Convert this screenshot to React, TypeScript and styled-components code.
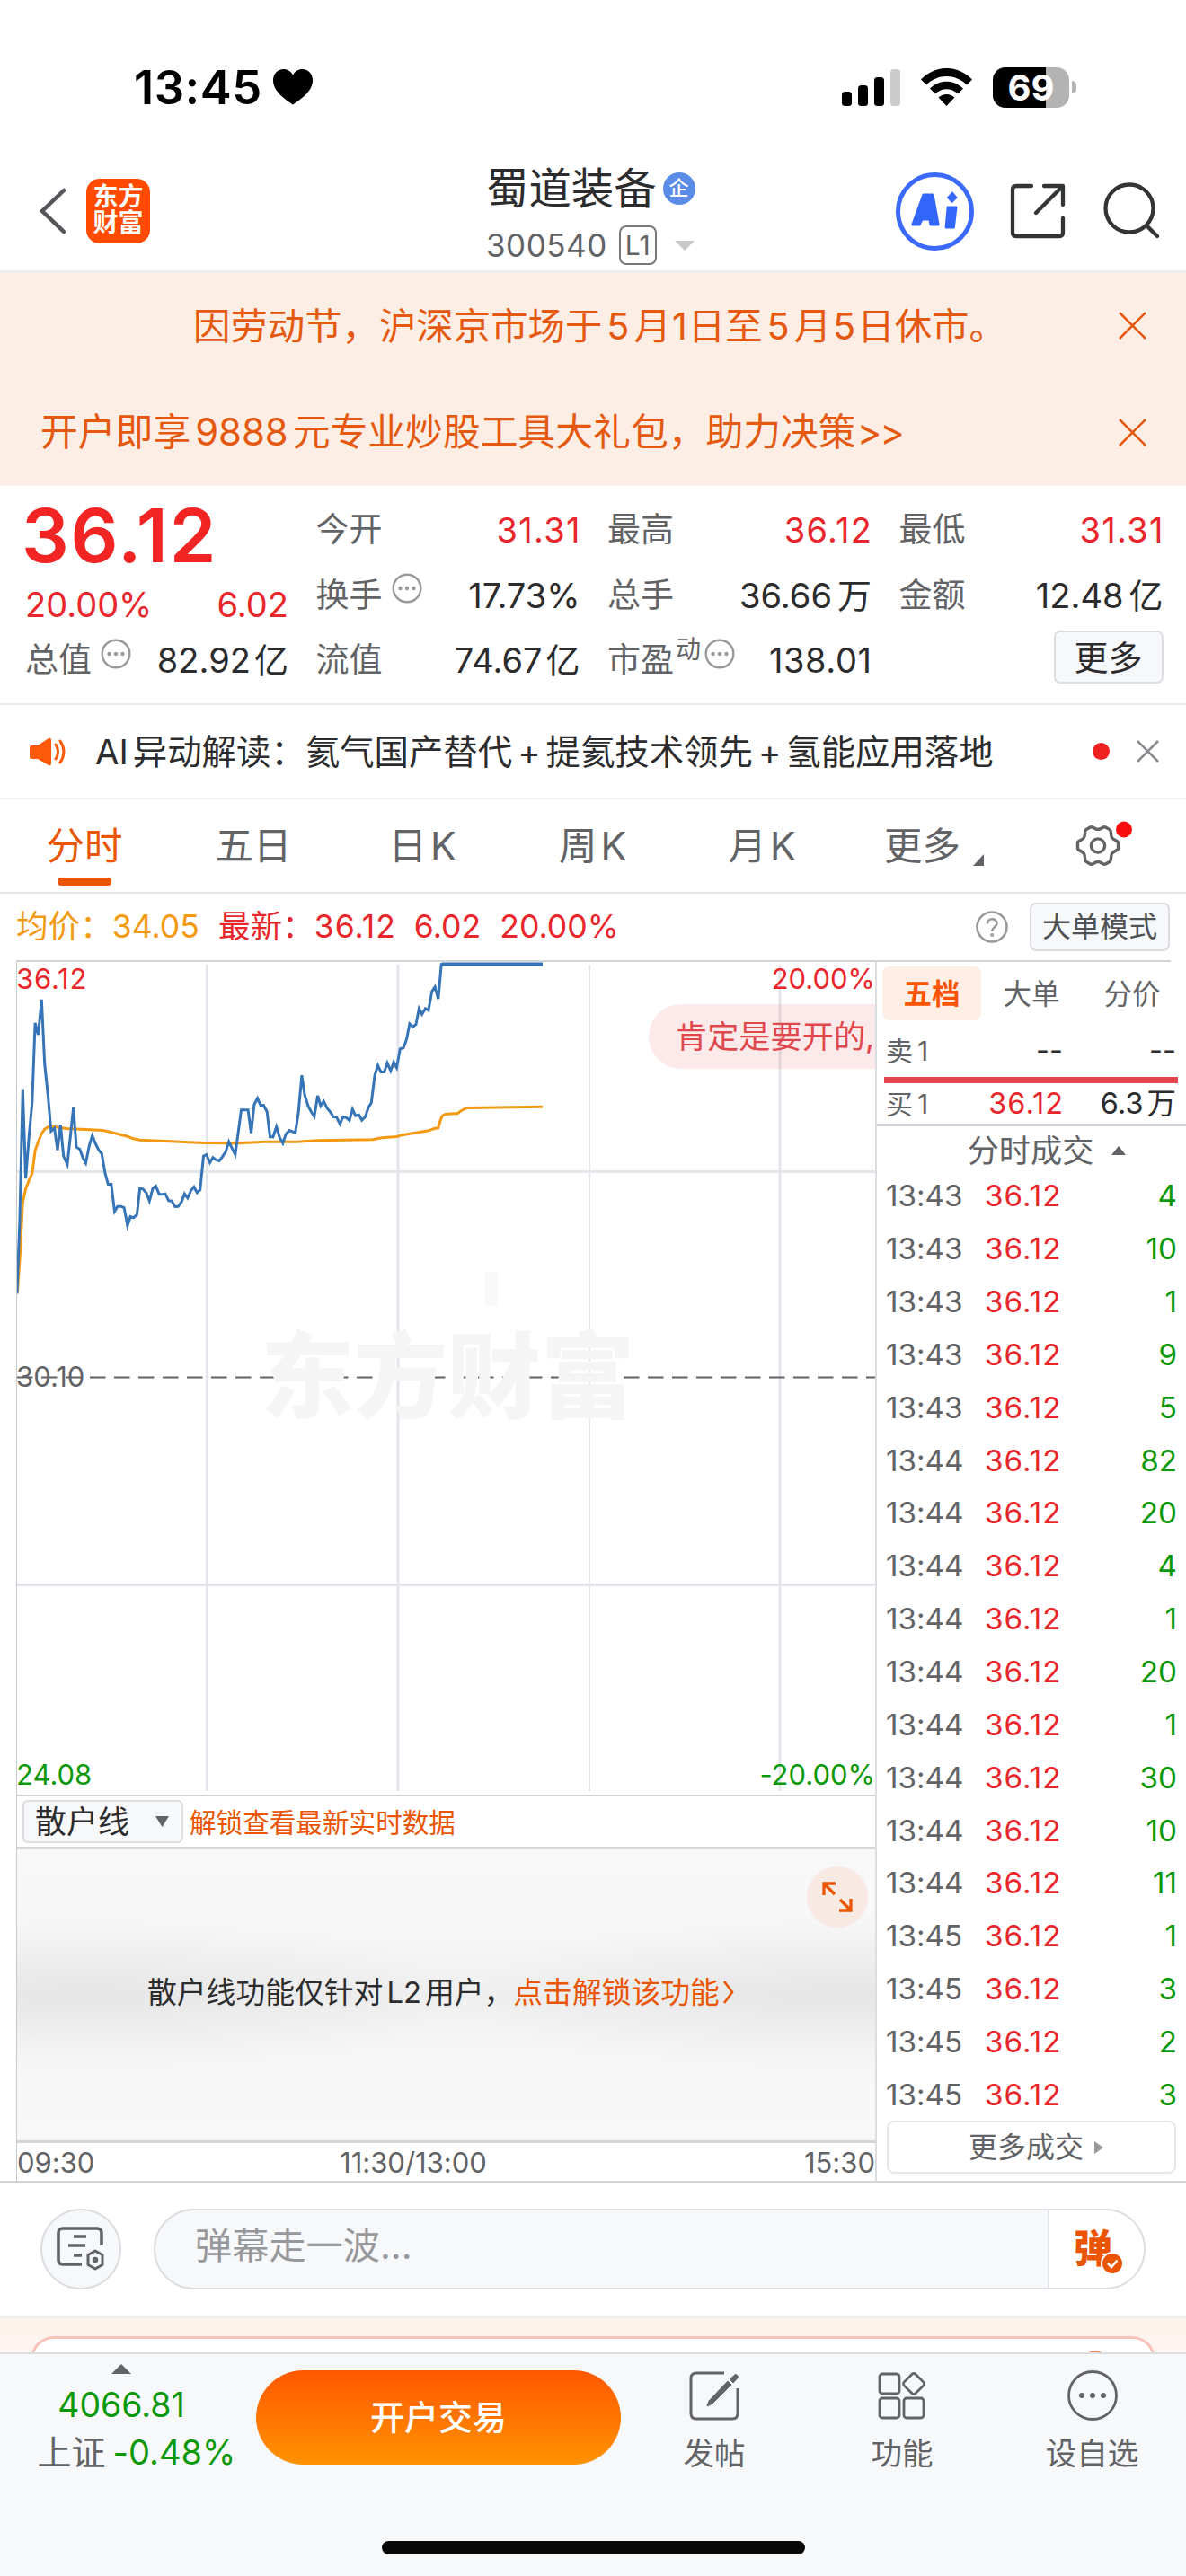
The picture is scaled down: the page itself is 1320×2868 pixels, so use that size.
import React from "react";
import styled, { createGlobalStyle } from "styled-components";

const GlobalStyle = createGlobalStyle`
  * { box-sizing: border-box; }
  html, body { margin: 0; padding: 0; background: #fff; }
  body { width: 1320px; overflow-x: hidden; font-family: Inter, "Noto Sans CJK SC", sans-serif; font-feature-settings: "calt" 0; }
  svg { display: block; flex: none; }
`;

const c = {
  red: "#e8262b",
  green: "#0b990b",
  orange: "#ea5504",
  text: "#2c2c2e",
  sub: "#626366",
  line: "#d3d4d6",
  panel: "#f7f8fa",
};

const Screen = styled.main`
  width: 1320px;
  height: 2868px;
  display: flex;
  flex-direction: column;
  overflow: hidden;
  background: #fff;
  color: ${c.text};
  white-space: nowrap;
`;

const Latin = styled.span<{ $gap?: number; $ls?: number }>`
  margin: 0 ${(p) => p.$gap ?? 5}px;
  letter-spacing: ${(p) => p.$ls ?? 0}px;
`;
const Wide = styled.span<{ $ls?: number }>`
  letter-spacing: ${(p) => p.$ls ?? 1.3}px;
  margin-right: -${(p) => p.$ls ?? 1.3}px;
`;

/* ---------- status bar ---------- */
const StatusBar = styled.header`
  height: 180px;
  padding: 73px 122px 0 149px;
  display: flex;
  justify-content: space-between;
`;
const StatusSide = styled.div`
  height: 48px;
  display: flex;
  align-items: center;
`;
const Clock = styled.span`
  font-size: 52.5px;
  font-weight: 600;
  line-height: 50px;
  color: #000;
  letter-spacing: 0.5px;
  margin-right: 12px;
`;
const Battery = styled.div`
  width: 85px;
  height: 45px;
  margin: 0 3px 0 23px;
  border-radius: 14px;
  background: linear-gradient(90deg, #000 59px, #b3b3b3 59px);
  color: #fff;
  font-size: 40px;
  font-weight: 700;
  line-height: 45px;
  text-align: center;
`;
const BatteryTip = styled.div`
  width: 5px;
  height: 14px;
  border-radius: 0 7px 7px 0;
  background: #b3b3b3;
`;
const Wifi = styled.svg`
  margin-left: 23px;
`;

/* ---------- nav bar ---------- */
const NavBar = styled.nav`
  height: 124px;
  display: grid;
  grid-template-columns: 520px 280px 1fr;
  border-bottom: 3px solid #eef0f0;
`;
const NavLeft = styled.div`
  height: 109px;
  padding-left: 43px;
  display: flex;
  align-items: center;
`;
const AppLogo = styled.div`
  width: 71px;
  height: 72px;
  margin-left: 22px;
  border-radius: 15px;
  background: #ff4a00;
  color: #fff;
  font-size: 28px;
  font-weight: 700;
  line-height: 29px;
  padding-top: 6px;
  text-align: center;
`;
const NavTitle = styled.div`
  padding-left: 21px;
`;
const StockName = styled.div`
  height: 49px;
  margin-top: 5px;
  display: flex;
  align-items: center;
  font-size: 47.4px;
  line-height: 49px;
`;
const CompanyBadge = styled.span`
  width: 36px;
  height: 36px;
  margin-left: 7px;
  border-radius: 50%;
  background: #5b8de8;
  color: #fff;
  font-size: 22px;
  font-weight: 500;
  line-height: 35px;
  text-align: center;
`;
const StockCode = styled.div`
  height: 44px;
  margin-top: 17px;
  display: flex;
  align-items: center;
  color: ${c.sub};
  font-size: 35px;
  line-height: 44px;
  letter-spacing: 0.5px;
`;
const LevelTag = styled.span`
  width: 42px;
  height: 44px;
  margin: 0 20px 0 13px;
  border: 2px solid #77787a;
  border-radius: 8px;
  font-size: 30px;
  line-height: 41px;
  text-align: center;
  letter-spacing: 0;
`;
const NavRight = styled.div`
  height: 110px;
  padding-right: 28px;
  display: flex;
  align-items: center;
  justify-content: flex-end;
`;
const AiBadge = styled.div`
  width: 87px;
  height: 87px;
  margin-right: 40px;
  border: 5px solid #3b69fb;
  border-radius: 50%;
  display: flex;
  align-items: center;
  justify-content: center;
`;
const ShareIcon = styled.svg`
  margin-right: 42px;
`;

/* ---------- banners ---------- */
const Banner = styled.div<{ $center?: boolean; $h: number }>`
  height: ${(p) => p.$h}px;
  flex: none;
  background: #fdeee5;
  color: #e4590f;
  display: flex;
  align-items: center;
  padding: 0 44px 0 ${(p) => (p.$center ? 215 : 45)}px;
  font-size: ${(p) => (p.$center ? 41.4 : 41.8)}px;
  line-height: 60px;
  justify-content: space-between;
`;

/* ---------- quote ---------- */
const Quote = styled.section`
  height: 244px;
  flex: none;
  padding: 13px 26px 0 28px;
  display: grid;
  grid-template-columns: 293px 294px 294px 294px;
  column-gap: 30.5px;
  border-bottom: 2px solid #ededee;
`;
const QuoteCol = styled.div`
  display: flex;
  flex-direction: column;
`;
const QuoteRow = styled.div`
  height: 72.5px;
  display: flex;
  align-items: center;
  justify-content: space-between;
`;
const BigPrice = styled.div`
  height: 84px;
  margin-left: -4px;
  font-size: 83px;
  font-weight: 600;
  line-height: 84px;
  letter-spacing: 1.8px;
  color: #f32424;
`;
const ChangeRow = styled.div`
  height: 61px;
  display: flex;
  align-items: center;
  justify-content: space-between;
  font-size: 38px;
  color: ${c.red};
  padding-top: 9px;
`;
const QuoteLabel = styled.span`
  display: flex;
  align-items: center;
  color: ${c.sub};
  font-size: 37px;
  line-height: 44px;
`;
const Hint = styled.span`
  margin: -15px 0 0 10px;
`;
const Sup = styled.sup`
  font-size: 28px;
  line-height: 30px;
  margin: -24px -6px 0 2px;
`;
const QuoteValue = styled.span<{ $up?: boolean }>`
  font-size: 38px;
  line-height: 44px;
  color: ${(p) => (p.$up ? c.red : c.text)};
`;
const MoreButton = styled.button`
  width: 122px;
  height: 59px;
  margin: 3px 0 0 auto;
  border: 2px solid #dcdde0;
  border-radius: 7px;
  background: ${c.panel};
  color: ${c.text};
  font: 400 38px/52px Inter, "Noto Sans CJK SC", sans-serif;
  padding: 0;
`;

/* ---------- news ---------- */
const News = styled.section`
  height: 105px;
  flex: none;
  display: flex;
  align-items: center;
  padding: 0 30px 0 33px;
  border-bottom: 2px solid #ededee;
  font-size: 38.4px;
  line-height: 50px;
`;
const NewsText = styled.span`
  flex: 1;
  margin-left: 32px;
`;
const Dot = styled.i`
  width: 19px;
  height: 19px;
  border-radius: 50%;
  background: #f02020;
  margin-right: 30px;
`;

/* ---------- tabs ---------- */
const Tabs = styled.div`
  height: 105px;
  flex: none;
  display: grid;
  grid-template-columns: 188px 188px 192px 187px 190px 189px 186px;
  border-bottom: 2px solid #e3e4e5;
`;
const Tab = styled.div<{ $on?: boolean }>`
  display: flex;
  flex-direction: column;
  align-items: center;
  justify-content: flex-end;
  gap: 5px;
  padding-bottom: 7px;
  font-size: 42.5px;
  line-height: 60px;
  color: ${(p) => (p.$on ? c.orange : c.sub)};
  &::after {
    content: "";
    width: 60px;
    height: 9px;
    border-radius: 4px;
    background: ${(p) => (p.$on ? c.orange : "transparent")};
  }
`;
const TabLabel = styled.span`
  display: flex;
  align-items: center;
`;
const TabCorner = styled.svg`
  margin: 30px 0 0 14px;
`;

/* ---------- info row ---------- */
const InfoRow = styled.div`
  height: 74px;
  flex: none;
  display: flex;
  align-items: center;
  padding: 0 18px 0 18px;
  font-size: 35.6px;
  line-height: 50px;
`;
const AvgPrice = styled.span`
  color: #f39a12;
  margin-right: 21px;
`;
const LastPrice = styled.span`
  color: ${c.red};
  flex: 1;
  display: flex;
  gap: 21px;
`;
const ModeButton = styled.button`
  width: 156px;
  height: 54px;
  margin-left: 24px;
  border: 2px solid #dcdde0;
  border-radius: 7px;
  background: ${c.panel};
  color: #505154;
  font: 400 32px/48px Inter, "Noto Sans CJK SC", sans-serif;
  padding: 0;
`;

/* ---------- trading area ---------- */
const Trading = styled.section`
  height: 1361px;
  flex: none;
  display: grid;
  grid-template-columns: 976px 344px;
  border-bottom: 2px solid ${c.line};
`;
const ChartCol = styled.div`
  margin-left: 18px;
  border-left: 1px solid #c9cacd;
  border-right: 2px solid #dcdde1;
  border-top: 2px solid ${c.line};
  display: flex;
  flex-direction: column;
`;
const Plot = styled.div`
  position: relative;
  height: 929px;
  border-bottom: 2px solid ${c.line};
  overflow: hidden;
`;
const PlotLayer = styled.div`
  position: absolute;
  inset: 0 0 3px -1px;
  display: flex;
  flex-direction: column;
  justify-content: space-between;
  font-size: 31px;
  line-height: 38px;
`;
const AxisLine = styled.div<{ $color: string }>`
  display: flex;
  justify-content: space-between;
  color: ${(p) => p.$color};
`;
const Watermark = styled.div`
  position: absolute;
  left: 271px;
  top: 402px;
  font-size: 104px;
  font-weight: 900;
  line-height: 120px;
  color: #f5f5f6;
`;
const Danmu = styled.div`
  position: absolute;
  left: 703px;
  top: 47px;
  width: 270px;
  height: 72px;
  padding-left: 30px;
  border-radius: 36px 0 0 36px;
  background: rgba(232, 60, 70, 0.11);
  color: #e0474c;
  font-size: 35.2px;
  line-height: 73px;
`;
const SubHead = styled.div`
  height: 59px;
  display: flex;
  align-items: center;
  padding-left: 6px;
  padding-bottom: 1px;
  border-bottom: 3px solid ${c.line};
`;
const Picker = styled.div`
  width: 179px;
  height: 48px;
  margin-right: 7px;
  padding: 0 14px 0 12px;
  border: 2px solid #dcdde0;
  border-radius: 6px;
  background: ${c.panel};
  display: flex;
  align-items: center;
  justify-content: space-between;
  font-size: 35px;
  line-height: 44px;
`;
const UnlockTip = styled.span`
  color: ${c.orange};
  font-size: 29.6px;
`;
const LockedPanel = styled.div`
  position: relative;
  height: 327px;
  border-bottom: 3px solid ${c.line};
  background:
    radial-gradient(ellipse 420px 95px at 8% 50%, rgba(0, 0, 0, 0.04), transparent),
    radial-gradient(ellipse 420px 95px at 96% 50%, rgba(0, 0, 0, 0.04), transparent),
    linear-gradient(180deg, #f8f8f8 0%, #f7f7f7 28%, #efefef 50%, #f7f7f7 72%, #f8f8f8 100%);
  display: flex;
  align-items: center;
  padding: 0 0 6px 145px;
  font-size: 32.8px;
  line-height: 50px;
`;
const UnlockLink = styled.span`
  color: ${c.orange};
  display: flex;
  align-items: center;
  gap: 3px;
`;
const Expand = styled.div`
  position: absolute;
  right: 8px;
  top: 19px;
  width: 68px;
  height: 68px;
  border-radius: 50%;
  background: #f8e9e2;
  display: flex;
  align-items: center;
  justify-content: center;
`;
const TimeAxis = styled.div`
  flex: 1;
  display: grid;
  grid-template-columns: 341px 200px 1fr;
  text-align: center;
  font-size: 31px;
  line-height: 44px;
  color: ${c.sub};
  > :first-child { text-align: left; }
  > :last-child { text-align: right; }
`;

const Book = styled.aside`
  display: flex;
  flex-direction: column;
  border-style: solid;
  border-width: 2px 0 0 0;
  border-image: linear-gradient(90deg, ${c.line} 326px, transparent 326px) 1;
`;
const BookTabs = styled.div`
  height: 68px;
  padding: 5px 12px 0 6px;
  display: grid;
  grid-template-columns: 110px 112px 112px;
`;
const BookTab = styled.span<{ $on?: boolean }>`
  height: 60px;
  border-radius: 8px;
  background: ${(p) => (p.$on ? "#feeee6" : "none")};
  color: ${(p) => (p.$on ? "#fa5400" : c.sub)};
  font-weight: ${(p) => (p.$on ? 700 : 400)};
  font-size: 31.5px;
  line-height: 61px;
  text-align: center;
`;
const Level = styled.div<{ $h: number }>`
  height: ${(p) => p.$h}px;
  display: grid;
  grid-template-columns: 80px 117px 1fr;
  align-items: center;
  padding: 1px 11px 0 10px;
  font-size: 32.5px;
  line-height: 40px;
  > :not(:first-child) { text-align: right; }
`;
const Side = styled.span`
  color: ${c.sub};
  font-size: 30px;
`;
const Tone = styled.span<{ $c?: string }>`
  color: ${(p) => p.$c ?? c.sub};
`;
const StrengthBar = styled.div`
  height: 7px;
  margin: 0 9px 0 8px;
  background: #e0484d;
`;
const TapeHead = styled.div`
  height: 50px;
  border-top: 3px solid #d2d2d8;
  display: flex;
  align-items: center;
  justify-content: center;
  gap: 20px;
  padding: 6px 0 0 34px;
  color: ${c.sub};
  font-size: 35.2px;
  line-height: 44px;
`;
const Tape = styled.div`
  display: grid;
  grid-auto-rows: 58.85px;
  padding-top: 1px;
`;
const TapeRow = styled.div`
  display: grid;
  grid-template-columns: 110px 90px 1fr;
  align-items: center;
  padding: 0 10px 0 10px;
  font-size: 33.2px;
  line-height: 40px;
  > :last-child { text-align: right; }
`;
const MoreTrades = styled.div`
  width: 322px;
  height: 59px;
  margin-left: 11px;
  border: 2px solid #e6e6e9;
  border-radius: 8px;
  display: flex;
  align-items: center;
  justify-content: center;
  gap: 12px;
  padding-left: 10px;
  color: ${c.sub};
  font-size: 32px;
  line-height: 40px;
`;

/* ---------- comment bar ---------- */
const CommentBar = styled.section`
  height: 148px;
  flex: none;
  display: flex;
  align-items: center;
  padding: 0 45px;
  gap: 36px;
`;
const RoundButton = styled.div`
  width: 90px;
  height: 90px;
  border: 2px solid #dcdde0;
  border-radius: 50%;
  background: ${c.panel};
  display: flex;
  align-items: center;
  justify-content: center;
`;
const CommentInput = styled.div`
  flex: 1;
  height: 90px;
  border: 2px solid #dcdde0;
  border-radius: 45px;
  background: ${c.panel};
  display: flex;
  overflow: hidden;
  padding-left: 44px;
  color: #97989b;
  font-size: 41.2px;
  line-height: 79px;
`;
const Placeholder = styled.span`
  flex: 1;
`;
const DanmuToggle = styled.div`
  position: relative;
  width: 107px;
  border-left: 2px solid #dcdde0;
  background: #fff;
  padding-left: 27px;
  color: ${c.orange};
  font-size: 43px;
  font-weight: 900;
  line-height: 84px;
`;
const ToggleMark = styled.svg`
  position: absolute;
  left: 57px;
  top: 46px;
`;
const Promo = styled.section`
  height: 41px;
  flex: none;
  overflow: hidden;
  padding: 20px 34px 0;
  border-top: 3px solid #efeff0;
  background: linear-gradient(180deg, #fef2ea, #fef5f1);
`;
const PromoCard = styled.div`
  height: 60px;
  border: 3px solid #f7c3bb;
  border-radius: 26px;
  background: #fff;
  padding: 13px 49px 0;
  display: flex;
  justify-content: flex-end;
`;
const PromoDot = styled.i`
  width: 30px;
  height: 30px;
  border-radius: 50%;
  background: #ee8a5a;
`;

/* ---------- bottom bar ---------- */
const BottomBar = styled.footer`
  flex: 1;
  border-top: 2px solid #dcdddf;
  background: ${c.panel};
  display: flex;
  flex-direction: column;
  justify-content: space-between;
  align-items: center;
  padding-bottom: 24px;
`;
const Actions = styled.div`
  width: 100%;
  height: 140px;
  display: grid;
  grid-template-columns: 285px 406px 206px 212px 211px;
`;
const IndexBox = styled.div`
  display: flex;
  flex-direction: column;
  align-items: center;
  padding: 11px 15px 0 0;
  font-size: 38px;
  color: ${c.green};
`;
const IndexValue = styled.span`
  height: 52px;
  line-height: 52px;
  margin-top: 9px;
  font-size: 37.5px;
`;
const IndexName = styled.span`
  height: 52px;
  line-height: 52px;
  display: flex;
  gap: 8px;
  margin-right: -34px;
`;
const TradeButton = styled.button`
  height: 105px;
  margin: 18px 0 0;
  padding: 0;
  border: 0;
  border-radius: 53px;
  background: linear-gradient(180deg, #ff5800, #ff9300);
  color: #fff;
  font: 500 38px/105px Inter, "Noto Sans CJK SC", sans-serif;
`;
const Action = styled.div`
  display: flex;
  flex-direction: column;
  align-items: center;
  padding: 17px 0 0 2px;
  font-size: 34.6px;
  line-height: 52px;
  color: ${c.sub};
  gap: 9px;
`;
const HomeIndicator = styled.div`
  width: 471px;
  height: 15px;
  border-radius: 8px;
  background: #080808;
`;

/* ---------- icons ---------- */
const Close = ({ size, color, w = 2.6 }: { size: number; color: string; w?: number }) => (
  <svg width={size} height={size} viewBox={`0 0 ${size} ${size}`} stroke={color} strokeWidth={w} fill="none">
    <path d={`M1 1L${size - 1} ${size - 1}M${size - 1} 1L1 ${size - 1}`} />
  </svg>
);
const More = ({ size = 34 }: { size?: number }) => (
  <svg width={size} height={size} viewBox="0 0 34 34" fill="none">
    <circle cx="17" cy="17" r="15.3" stroke="#98999b" strokeWidth="2.4" />
    <g fill="#98999b">
      <circle cx="9.5" cy="17" r="2.2" />
      <circle cx="17" cy="17" r="2.2" />
      <circle cx="24.5" cy="17" r="2.2" />
    </g>
  </svg>
);

/* ---------- chart data, in plot units of 0.42092 x 1/3 px ---------- */
const price: [number, number][] = [
  [45, 1140], [52, 900], [60, 456], [68, 755], [77, 610], [85, 500], [93, 235], [101, 275], [110, 157], [118, 372],
  [127, 480], [135, 597], [144, 587], [152, 660], [160, 575], [168, 680], [178, 708], [186, 615], [194, 517], [202, 650],
  [211, 657], [219, 685], [227, 703], [236, 645], [244, 612], [253, 640], [261, 660], [269, 672], [278, 738], [286, 774],
  [294, 774], [303, 865], [311, 848], [320, 848], [328, 852], [337, 912], [345, 882], [353, 886], [362, 876], [370, 788],
  [378, 790], [387, 803], [395, 830], [404, 788], [412, 780], [421, 808], [429, 808], [437, 806], [446, 829], [454, 830],
  [463, 849], [471, 848], [480, 833], [488, 806], [496, 820], [505, 795], [513, 783], [521, 802], [529, 793], [538, 680],
  [546, 675], [555, 702], [563, 685], [571, 692], [580, 696], [588, 682], [597, 665], [605, 632], [613, 652], [622, 675],
  [630, 600], [638, 526], [647, 526], [656, 526], [664, 603], [672, 508], [681, 487], [689, 510], [697, 510], [706, 532],
  [714, 615], [722, 616], [731, 582], [739, 617], [748, 637], [756, 607], [765, 594], [773, 598], [781, 602], [789, 535],
  [798, 410], [806, 478], [815, 513], [823, 532], [831, 548], [840, 478], [848, 512], [856, 497], [865, 520], [873, 532],
  [882, 549], [890, 550], [899, 573], [907, 549], [915, 551], [924, 561], [932, 523], [940, 545], [949, 542], [957, 560],
  [966, 548], [974, 518], [982, 502], [991, 410], [999, 377], [1007, 399], [1016, 399], [1024, 369], [1033, 395], [1041, 366],
  [1049, 385], [1058, 322], [1067, 318], [1075, 290], [1083, 238], [1092, 248], [1100, 240], [1108, 187], [1116, 206],
  [1125, 187], [1133, 193], [1142, 130], [1150, 115], [1159, 155], [1167, 40], [1435, 40],
];
const average: [number, number][] = [
  [46, 1135], [53, 1010], [60, 835], [68, 790], [77, 760], [85, 738], [93, 662], [101, 632], [110, 605], [118, 590],
  [127, 583], [144, 582], [175, 588], [240, 592], [272, 594], [300, 602], [337, 614], [350, 621], [370, 626], [450, 631],
  [538, 636], [632, 637], [700, 632], [785, 632], [840, 628], [985, 625], [1010, 619], [1049, 615], [1062, 610], [1092, 604],
  [1133, 595], [1148, 588], [1159, 586], [1164, 562], [1169, 546], [1178, 540], [1210, 537], [1220, 528], [1235, 519], [1435, 515],
];
const toPoints = (pts: [number, number][]) =>
  pts.map(([x, y]) => `${(x * 0.42092 - 19).toFixed(1)},${(y / 3 - 10.5).toFixed(1)}`).join(" ");

const trades: [string, number][] = [
  ["13:43", 4], ["13:43", 10], ["13:43", 1], ["13:43", 9], ["13:43", 5], ["13:44", 82], ["13:44", 20], ["13:44", 4], ["13:44", 1],
  ["13:44", 20], ["13:44", 1], ["13:44", 30], ["13:44", 10], ["13:44", 11], ["13:45", 1], ["13:45", 3], ["13:45", 2], ["13:45", 3],
];

export default function App() {
  return (
    <Screen>
      <GlobalStyle />
      <StatusBar>
        <StatusSide>
          <Clock>13:45</Clock>
          <svg width="44" height="40" viewBox="0 0 44 40">
            <path d="M22 39.5C14 34 0 25 0 12.5C0 5 5 0 11.500 0C16 0 20 2.500 22 6.500C24 2.500 28 0 32.500 0C39 0 44 5 44 12.500C44 25 30 34 22 39.500Z" />
          </svg>
        </StatusSide>
        <StatusSide>
          <svg width="65" height="41" viewBox="0 0 65 41">
            <rect x="0" y="25" width="11" height="16" rx="3.5" />
            <rect x="18" y="18" width="11" height="23" rx="3.5" />
            <rect x="36" y="9" width="11" height="32" rx="3.500" />
            <rect x="54" y="0" width="11" height="41" rx="3.500" fill="#cbcbcb" />
          </svg>
          <Wifi width="57" height="42" viewBox="0 0 57 42">
            <path d="M0 12.500C16 -4.200 41 -4.200 57 12.500L51 18.500C38.500 5.800 18.500 5.800 6 18.500Z" />
            <path d="M10 22.500C20.500 12 36.500 12 47 22.500L41 28.500C34 21.500 23 21.500 16 28.500Z" />
            <path d="M19.500 32.500C24.500 27.800 32.500 27.800 37.500 32.500L28.500 42Z" />
          </Wifi>
          <Battery>69</Battery>
          <BatteryTip />
        </StatusSide>
      </StatusBar>

      <NavBar>
        <NavLeft>
          <svg width="31" height="52" viewBox="0 0 31 52" fill="none" stroke="#55565a" strokeWidth="4.500" strokeLinecap="round">
            <path d="M28 3L4 26L28 49" />
          </svg>
          <AppLogo>
            东方
            <br />
            财富
          </AppLogo>
        </NavLeft>
        <NavTitle>
          <StockName>
            蜀道装备<CompanyBadge>企</CompanyBadge>
          </StockName>
          <StockCode>
            300540<LevelTag>L1</LevelTag>
            <svg width="22" height="11" viewBox="0 0 22 11">
              <path d="M0 0H22L11 11Z" fill="#c8c9cb" />
            </svg>
          </StockCode>
        </NavTitle>
        <NavRight>
          <AiBadge>
            <svg width="54" height="44" viewBox="0 0 54 44" fill="#3366fb" stroke="#3366fb" strokeLinejoin="round">
              <path d="M14 4H24L30 37H22L21 31H12L9 37H2ZM18 17L15 25H19.500Z" fillRule="evenodd" strokeWidth="3.200" />
              <path d="M41 18H50L47.500 40H39Z" strokeWidth="2.800" />
              <path d="M46 0.500L51.500 7L45.500 13L40 7Z" strokeWidth="0.500" />
            </svg>
          </AiBadge>
          <ShareIcon width="62" height="62" viewBox="0 0 62 62" fill="none" stroke="#333436" strokeWidth="4.300" strokeLinecap="round" strokeLinejoin="round">
            <path d="M24 3H7Q3 3 3 7V55Q3 59 7 59H55Q59 59 59 55V39M38 3H59V24M58 4L29 33" />
          </ShareIcon>
          <svg width="64" height="64" viewBox="0 0 64 64" fill="none" stroke="#333436" strokeWidth="4.300" strokeLinecap="round">
            <circle cx="29" cy="29" r="26.500" />
            <path d="M48 48L60 60" />
          </svg>
        </NavRight>
      </NavBar>

      <Banner $center $h={117}>
        <span>
          因劳动节，沪深京市场于<Latin>5</Latin>月<Latin $gap={1}>1</Latin>日至<Latin>5</Latin>月<Latin $gap={2}>5</Latin>日休市。
        </span>
        <Close size={31} color="#e4590f" />
      </Banner>
      <Banner $h={120}>
        <span>
          开户即享<Latin $gap={5}>9888</Latin>元专业炒股工具大礼包，助力决策<Latin $gap={1} $ls={-2}>&gt;&gt;</Latin>
        </span>
        <Close size={31} color="#e4590f" />
      </Banner>

      <Quote>
        <QuoteCol>
          <BigPrice>36.12</BigPrice>
          <ChangeRow>
            <span>20.00%</span>
            <span>6.02</span>
          </ChangeRow>
          <QuoteRow>
            <QuoteLabel>
              总值
              <Hint>
                <More />
              </Hint>
            </QuoteLabel>
            <QuoteValue>82.92<Latin $gap={2} />亿</QuoteValue>
          </QuoteRow>
        </QuoteCol>
        <QuoteCol>
          <QuoteRow>
            <QuoteLabel>今开</QuoteLabel>
            <QuoteValue $up>
              <Wide>31.31</Wide>
            </QuoteValue>
          </QuoteRow>
          <QuoteRow>
            <QuoteLabel>
              换手
              <Hint>
                <More />
              </Hint>
            </QuoteLabel>
            <QuoteValue>17.73%</QuoteValue>
          </QuoteRow>
          <QuoteRow>
            <QuoteLabel>流值</QuoteLabel>
            <QuoteValue>74.67<Latin $gap={2} />亿</QuoteValue>
          </QuoteRow>
        </QuoteCol>
        <QuoteCol>
          <QuoteRow>
            <QuoteLabel>最高</QuoteLabel>
            <QuoteValue $up>
              <Wide>36.12</Wide>
            </QuoteValue>
          </QuoteRow>
          <QuoteRow>
            <QuoteLabel>总手</QuoteLabel>
            <QuoteValue>36.66<Latin $gap={3} />万</QuoteValue>
          </QuoteRow>
          <QuoteRow>
            <QuoteLabel>
              市盈<Sup>动</Sup>
              <Hint>
                <More />
              </Hint>
            </QuoteLabel>
            <QuoteValue>
              <Wide $ls={0.6}>138.01</Wide>
            </QuoteValue>
          </QuoteRow>
        </QuoteCol>
        <QuoteCol>
          <QuoteRow>
            <QuoteLabel>最低</QuoteLabel>
            <QuoteValue $up>
              <Wide>31.31</Wide>
            </QuoteValue>
          </QuoteRow>
          <QuoteRow>
            <QuoteLabel>金额</QuoteLabel>
            <QuoteValue>12.48<Latin $gap={3} />亿</QuoteValue>
          </QuoteRow>
          <MoreButton>更多</MoreButton>
        </QuoteCol>
      </Quote>

      <News>
        <svg width="41" height="32" viewBox="0 0 41 32" fill="#ff5a0a">
          <path d="M2 9H9L21 1Q24 0 24 3V29Q24 32 21 31L9 24H2Q0 24 0 22V11Q0 9 2 9Z" />
          <path d="M29 8Q34 16 29 24M34 4Q42 16 34 28" fill="none" stroke="#ff5a0a" strokeWidth="3" strokeLinecap="round" />
        </svg>
        <NewsText>
          AI<Latin $gap={2.5} />异动解读：氦气国产替代<Latin $gap={6}>+</Latin>提氦技术领先<Latin $gap={6}>+</Latin>氢能应用落地
        </NewsText>
        <Dot />
        <Close size={25} color="#88898c" />
      </News>

      <Tabs>
        <Tab $on>分时</Tab>
        <Tab>五日</Tab>
        <Tab>
          <TabLabel>日<Latin $gap={4}>K</Latin></TabLabel>
        </Tab>
        <Tab>
          <TabLabel>周<Latin $gap={4}>K</Latin></TabLabel>
        </Tab>
        <Tab>
          <TabLabel>月<Latin $gap={4}>K</Latin></TabLabel>
        </Tab>
        <Tab>
          <TabLabel>
            更多
            <TabCorner width="12" height="13" viewBox="0 0 12 13">
              <path d="M12 0V13H0Z" fill="#626366" />
            </TabCorner>
          </TabLabel>
        </Tab>
        <Tab>
          <TabLabel>
            <svg width="66" height="60" viewBox="0 0 66 60" fill="none" stroke="#626366" strokeWidth="3.400" strokeLinejoin="round">
              <path d="M19.500 9C22 7.500 24 11.500 28 11.500C32 11.500 34 7.500 36.500 9L41 11.600C43.500 13 41.500 16.500 43.500 20.500C45.500 24 50.500 23.500 50.500 26.500V32.500C50.500 35.500 45.500 35 43.500 38.500C41.500 42.500 43.500 46 41 47.400L36.500 50C34 51.500 32 47.500 28 47.500C24 47.500 22 51.500 19.500 50L15 47.400C12.500 46 14.500 42.500 12.500 38.500C10.500 35 5.500 35.500 5.500 32.500V26.500C5.500 23.500 10.500 24 12.500 20.500C14.500 16.500 12.500 13 15 11.600Z" />
              <circle cx="28" cy="29.500" r="7.600" />
              <circle cx="57" cy="11.500" r="9" fill="#fb0d0d" stroke="none" />
            </svg>
          </TabLabel>
        </Tab>
      </Tabs>

      <InfoRow>
        <AvgPrice>均价：34.05</AvgPrice>
        <LastPrice>
          <span>
            最新：<Wide $ls={1}>36.12</Wide>
          </span>
          <span>6.02</span>
          <span>20.00%</span>
        </LastPrice>
        <svg width="36" height="36" viewBox="0 0 36 36" fill="none" stroke="#98999b" strokeWidth="2.600">
          <circle cx="18" cy="18" r="16.500" />
          <path d="M13 14.500C13 7.500 23.500 7.800 23.500 14C23.500 18.300 18.200 17.800 18.200 23" />
          <circle cx="18.200" cy="27" r="0.800" />
        </svg>
        <ModeButton>大单模式</ModeButton>
      </InfoRow>

      <Trading>
        <ChartCol>
          <Plot>
            <Watermark>东方财富</Watermark>
            <svg width="955" height="927" viewBox="0 0 955 927" fill="none">
              <rect x="521" y="345" width="14" height="38" fill="#f9f9fa" />
              <g stroke="#e4e5eb" strokeWidth="3">
                <path d="M211.500 3V923M424 3V923M849 3V923" />
                <path d="M0 233.500H955M0 693.500H955" />
                <path d="M637 3V923" strokeWidth="2" />
              </g>
              <path d="M0 462.500H955" stroke="#606165" strokeWidth="2.200" strokeDasharray="17.500 9.500" />
              <polyline points={toPoints(average)} stroke="#f39a12" strokeWidth="3" />
              <polyline points={toPoints(price)} stroke="#3674b8" strokeWidth="3" />
              <path d="M472.500 2.500H585" stroke="#3674b8" strokeWidth="4" />
            </svg>
            <PlotLayer>
              <AxisLine $color={c.red}>
                <Wide $ls={0.8}>36.12</Wide>
                <span>20.00%</span>
              </AxisLine>
              <AxisLine $color={c.sub}>30.10</AxisLine>
              <AxisLine $color={c.green}>
                <span>24.08</span>
                <span>-20.00%</span>
              </AxisLine>
            </PlotLayer>
            <Danmu>肯定是要开的,</Danmu>
          </Plot>
          <SubHead>
            <Picker>
              散户线
              <svg width="15" height="12" viewBox="0 0 15 12">
                <path d="M0 0H15L7.500 12Z" fill="#626366" />
              </svg>
            </Picker>
            <UnlockTip>解锁查看最新实时数据</UnlockTip>
          </SubHead>
          <LockedPanel>
            散户线功能仅针对<Latin $gap={4}>L2</Latin>用户，
            <UnlockLink>
              点击解锁该功能
              <svg width="14" height="26" viewBox="0 0 14 26" fill="none" stroke="#ea5504" strokeWidth="2.600">
                <path d="M2 1L11 13L2 25" />
              </svg>
            </UnlockLink>
            <Expand>
              <svg width="36" height="36" viewBox="0 0 36 36" fill="none" stroke="#ea5504" strokeWidth="3.300">
                <path d="M3 16V3H16M3.500 3.500L15 15M33 20V33H20M32.500 32.500L21 21" />
              </svg>
            </Expand>
          </LockedPanel>
          <TimeAxis>
            <span>09:30</span>
            <span>11:30/13:00</span>
            <span>15:30</span>
          </TimeAxis>
        </ChartCol>

        <Book>
          <BookTabs>
            <BookTab $on>五档</BookTab>
            <BookTab>大单</BookTab>
            <BookTab>分价</BookTab>
          </BookTabs>
          <Level $h={60}>
            <Side>卖<Latin>1</Latin></Side>
            <Tone $c={c.text}>--</Tone>
            <Tone $c={c.text}>--</Tone>
          </Level>
          <StrengthBar />
          <Level $h={45}>
            <Side>买<Latin>1</Latin></Side>
            <Tone $c={c.red}>
              <Wide $ls={1}>36.12</Wide>
            </Tone>
            <Tone $c={c.text}>6.3<Latin $gap={2} />万</Tone>
          </Level>
          <TapeHead>
            分时成交
            <svg width="16" height="10" viewBox="0 0 16 10">
              <path d="M0 10L8 0L16 10Z" fill="#626366" />
            </svg>
          </TapeHead>
          <Tape>
            {trades.map(([time, volume], i) => (
              <TapeRow key={i}>
                <Tone>{time}</Tone>
                <Tone $c={c.red}>
                  <Wide $ls={1}>36.12</Wide>
                </Tone>
                <Tone $c={c.green}>{volume}</Tone>
              </TapeRow>
            ))}
          </Tape>
          <MoreTrades>
            更多成交
            <svg width="10" height="14" viewBox="0 0 10 14">
              <path d="M0 0L10 7L0 14Z" fill="#98999b" />
            </svg>
          </MoreTrades>
        </Book>
      </Trading>

      <CommentBar>
        <RoundButton>
          <svg width="54" height="54" viewBox="0 0 54 54" fill="none" stroke="#626366" strokeWidth="3.600" strokeLinejoin="round">
            <path d="M50 23V9Q50 4 45 4H7Q2 4 2 9V39Q2 44 7 44H28" />
            <path d="M19 13H33M13 23H32M19 34H28" />
            <path d="M43 29L51 33.500V44.500L43 49L35 44.500V33.500Z" strokeWidth="3" />
            <circle cx="43" cy="39" r="1.500" />
          </svg>
        </RoundButton>
        <CommentInput>
          <Placeholder>弹幕走一波...</Placeholder>
          <DanmuToggle>
            弹
            <ToggleMark width="26" height="26" viewBox="0 0 26 26" fill="none">
              <circle cx="13" cy="13" r="12" fill="#ea5504" stroke="#fff" strokeWidth="2" />
              <path d="M8 13L12 17L18.500 9.500" stroke="#fff" strokeWidth="2.600" />
            </ToggleMark>
          </DanmuToggle>
        </CommentInput>
      </CommentBar>

      <Promo>
        <PromoCard>
          <PromoDot />
        </PromoCard>
      </Promo>

      <BottomBar>
        <Actions>
          <IndexBox>
            <svg width="22" height="11" viewBox="0 0 22 11">
              <path d="M0 11L11 0L22 11Z" fill="#626366" />
            </svg>
            <IndexValue>4066.81</IndexValue>
            <IndexName>
              <Tone>上证</Tone>
              <span>-0.48%</span>
            </IndexName>
          </IndexBox>
          <TradeButton>开户交易</TradeButton>
          <Action>
            <svg width="58" height="58" viewBox="0 0 58 58" fill="none" stroke="#626366" strokeWidth="3">
              <path d="M40 4H9Q3 4 3 10V49Q3 55 9 55H49Q55 55 55 49V21" />
              <path d="M23 35L44 13L48 17L27 38L21 41Z" fill="#626366" strokeWidth="1" />
              <path d="M46.500 11L51 6.500Q53 4.500 54.500 6.500Q56.500 8 54.500 10L50 15Z" fill="#626366" strokeWidth="1" />
            </svg>
            发帖
          </Action>
          <Action>
            <svg width="58" height="58" viewBox="0 0 58 58" fill="none" stroke="#626366" strokeWidth="2.800">
              <rect x="4" y="5" width="22" height="22" rx="3" />
              <rect x="4" y="32" width="22" height="22" rx="3" />
              <rect x="31" y="32" width="22" height="22" rx="3" />
              <rect x="33" y="7" width="18" height="18" rx="3" transform="rotate(45 42 16)" />
            </svg>
            功能
          </Action>
          <Action>
            <svg width="58" height="58" viewBox="0 0 58 58" fill="none" stroke="#626366" strokeWidth="2.800">
              <circle cx="29" cy="29" r="26.500" />
              <g fill="#626366" stroke="none">
                <circle cx="17" cy="29" r="3" />
                <circle cx="29" cy="29" r="3" />
                <circle cx="41" cy="29" r="3" />
              </g>
            </svg>
            设自选
          </Action>
        </Actions>
        <HomeIndicator />
      </BottomBar>
    </Screen>
  );
}
